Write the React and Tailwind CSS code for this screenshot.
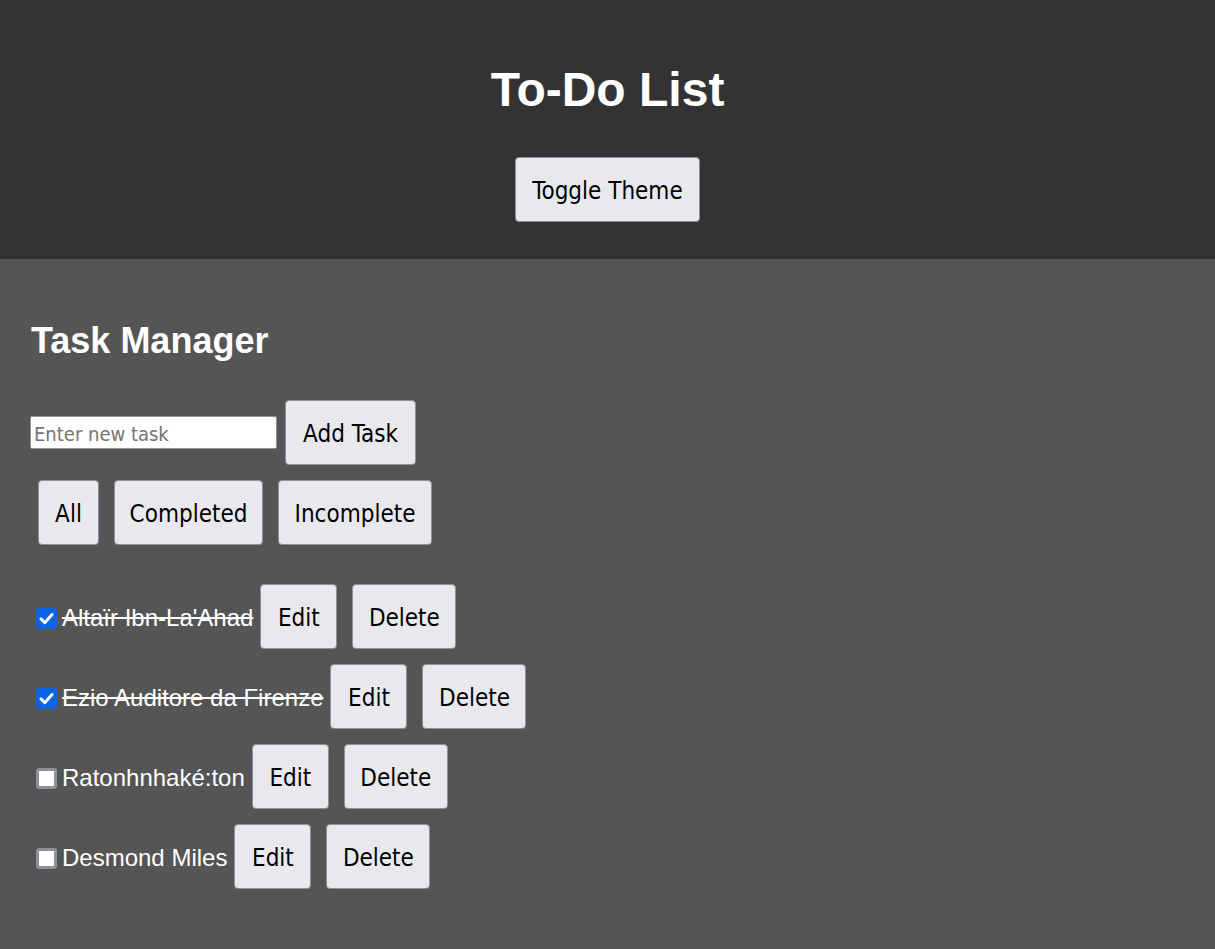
import React from "react";

const btnFont = { fontFamily: '"DejaVu Sans Condensed", "DejaVu Sans", sans-serif' };

function Btn({ w, children, className = "" }) {
  return (
    <button
      className={`h-[65px] shrink-0 rounded-[4px] border border-[#8f8f9d] bg-[#e9e9ed] text-[24px] text-black flex items-center justify-center pt-[3px] ${w} ${className}`}
      style={btnFont}
    >
      {children}
    </button>
  );
}

function Check({ checked }) {
  if (checked) {
    return (
      <span className="mt-[3px] w-[21px] h-[21px] shrink-0 rounded-[3px] bg-[#0b63e5] flex items-center justify-center">
        <svg width="17" height="17" viewBox="0 0 16 16" fill="none">
          <path d="M2.8 8.4 L6.4 12 L13.2 4.2" stroke="white" strokeWidth="2.8" strokeLinecap="round" strokeLinejoin="round" />
        </svg>
      </span>
    );
  }
  return <span className="mt-[3px] w-[21px] h-[21px] shrink-0 rounded-[3px] border-[3px] border-[#8f8f9d] bg-white" />;
}

const tasks = [
  { name: "Altaïr Ibn-La'Ahad", done: true },
  { name: "Ezio Auditore da Firenze", done: true },
  { name: "Ratonhnhaké:ton", done: false },
  { name: "Desmond Miles", done: false },
];

export default function App() {
  return (
    <div className="min-h-[949px] bg-[#555555]" style={{ fontFamily: '"Liberation Sans", Arial, sans-serif' }}>
      <header className="h-[259px] bg-[#333333] flex flex-col items-center pt-[63px]">
        <h1 className="text-[48px] leading-[54px] font-bold text-white">To-Do List</h1>
        <div className="mt-[40px]">
          <Btn w="w-[185px]" className="h-[64px]">Toggle Theme</Btn>
        </div>
      </header>
      <main className="pl-[30px] pt-[61px]">
        <h2 className="text-[36px] leading-[41px] font-bold text-white pl-[1px]">Task Manager</h2>
        <div className="mt-[39px] flex items-center gap-[8px]">
          <input
            type="text"
            placeholder="Enter new task"
            className="w-[247px] h-[33px] bg-white border border-[#8f8f9d] rounded-[2px] px-[3px] pt-[2px] text-[20px] text-black placeholder:text-[#757575] outline-none"
            style={btnFont}
          />
          <Btn w="w-[131px]">Add Task</Btn>
        </div>
        <div className="mt-[15px] pl-[8px] flex gap-[15px]">
          <Btn w="w-[61px]">All</Btn>
          <Btn w="w-[149px]">Completed</Btn>
          <Btn w="w-[154px]">Incomplete</Btn>
        </div>
        <ul className="mt-[39px] flex flex-col gap-[15px]">
          {tasks.map((t) => (
            <li key={t.name} className="flex items-center pl-[6px]">
              <Check checked={t.done} />
              <span className={`ml-[5px] mr-[7px] mt-[3px] text-[24px] text-white ${t.done ? "line-through" : ""}`}>{t.name}</span>
              <Btn w="w-[77px]">Edit</Btn>
              <Btn w="w-[104px]" className="ml-[15px]">Delete</Btn>
            </li>
          ))}
        </ul>
      </main>
    </div>
  );
}
